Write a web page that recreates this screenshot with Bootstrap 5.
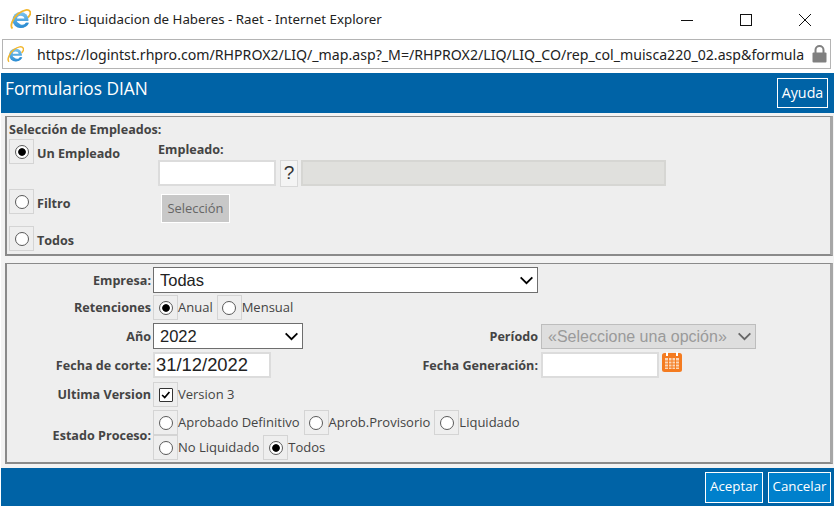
<!DOCTYPE html>
<html lang="es">
<head>
<meta charset="utf-8">
<title>Filtro</title>
<link rel="stylesheet" href="https://cdn.jsdelivr.net/npm/bootstrap@5.3.0/dist/css/bootstrap.min.css">
<style>
html,body{height:507px;overflow:hidden;background:#fff}
body{font-family:"Open Sans","Noto Sans",sans-serif;font-size:13px;color:#444;line-height:1.2}
.win-title{height:39px;padding-left:10px;font-family:"Noto Sans",sans-serif;font-size:13.300px;color:#222}
.win-title .ttl{margin-left:4px}
.win-ctrls{margin-left:auto;gap:0}
.win-ctrl{width:59px;height:39px;display:flex;align-items:center;justify-content:center}
.addr{height:30px;margin:0 3px 0 2px;border:1px solid #b4b4b4;padding:0 3px 0 4px;font-family:"Noto Sans",sans-serif;font-size:14.150px;color:#222;white-space:nowrap}
.addr .url{margin-left:13px;flex:1;min-width:0}
.dlg-head{height:40px;margin:4px 0 0 1px;background:#0063a6;color:#fff;padding:0 6px 0 4px}
.dlg-title{font-size:17.300px;color:#fff;margin:0;font-weight:400;padding-bottom:7px}
.dlg-btn{border:1px solid #fff;border-radius:0;color:#fff;font-size:13.300px;padding:0;height:30px;background:transparent;display:flex;align-items:center;justify-content:center}
.dlg-btn:hover{color:#fff}
.btn-ayuda{width:51px;font-size:14.300px}
.dlg-body{margin-left:1px;padding:3px 0 4px 4px;background:#f3f3f3}
.panel-a,.panel-b{margin:0 1px 0 0;border:2px solid #8a8a8a;border-width:1px 3px 2px 2px;border-right-color:#a6a6a6;background:#eee}
.panel-a{height:140px;padding:5px 0 0 2px}
.panel-b{margin-top:7px;height:201px;padding:3px 0 0 0}
.sec-title{font-weight:700;font-size:12.600px;color:#444;height:17px}
.rbox{width:25px;height:25px;background:#eee;border:1px solid #d4d4d4;display:inline-flex;align-items:center;justify-content:center;flex:none}
.rbox input{appearance:none;-webkit-appearance:none;width:14px;height:14px;margin:0;background:#fff;border:1px solid #5a5a5a;border-radius:50%;display:block}
.rbox input:checked{background:radial-gradient(circle,#000 0,#000 3.4px,#fff 4.2px)}
.rbox input[type=checkbox]{border-radius:1px;border-color:#333;position:relative}
.rbox input[type=checkbox]:checked{background:#fff url("data:image/svg+xml,%3Csvg xmlns='http://www.w3.org/2000/svg' viewBox='0 0 14 14'%3E%3Cpath d='M2.5 7l3 3 5.5-6.5' fill='none' stroke='%23000' stroke-width='2'/%3E%3C/svg%3E") center/contain no-repeat}
.emp-left{width:149px;flex:none;font-weight:700;font-size:12.600px}
.opt-a{height:25px;gap:3px}
.opt-a .opt-t{padding-top:4px}
.opt-a.last{margin-top:12px}
.opt-first{height:50px;align-items:flex-start}
.opt-first .opt-t{padding-top:7px}
.emp-right{font-size:12.600px;font-weight:700}
.emp-label{height:16px;margin-top:3px;margin-bottom:2px;line-height:16px}
.form-control.txt{border:2px solid #dcdcdc;border-radius:0;background:#fff;height:26px;padding:0 1px;box-shadow:none;font-family:"Liberation Sans",Arial,sans-serif;color:#222}
.q-mark{width:18px;height:27px;border:1px solid #d8d8d8;background:#f4f4f4;font-family:"Liberation Sans",Arial,sans-serif;font-size:19px;font-weight:400;color:#333;display:flex;align-items:center;justify-content:center;margin:0 3px 0 4px}
.txt-w{width:118px}
.form-control.txt.txt-dis{width:365px;background:#e0e0dd;border-color:#d6d6d3}
.btn-sel{margin:7px 0 0 3px;width:69px;height:29px;background:#c8c8c8;border:1px solid #fff;border-radius:0;font-size:12.900px;color:#666;padding:0}
.btn-sel:hover,.btn-sel:disabled{background:#c8c8c8;color:#666}
.f-row{display:flex;align-items:center}
.lbl{width:144px;flex:none;text-align:right;font-weight:700;font-size:12.600px;color:#444;margin-right:2px;padding-top:1px}
.lbl2{width:145px;flex:none;text-align:right;font-weight:700;font-size:12.600px;color:#444;margin-right:3px;padding-top:1px}
.half{width:386px;flex:none;display:flex;align-items:center}
.sel{height:26px;border:1px solid #6e6e6e;border-radius:0;padding:0 0 0 6px;font-family:"Liberation Sans",Arial,sans-serif;font-size:16.500px;color:#222;background-color:#fff;background-image:url("data:image/svg+xml,%3Csvg xmlns='http://www.w3.org/2000/svg' viewBox='0 0 16 10'%3E%3Cpath d='M1.5 1.5L8 8l6.5-6.5' fill='none' stroke='%23000' stroke-width='2'/%3E%3C/svg%3E");background-repeat:no-repeat;background-position:right 3px center;background-size:15px 9px;box-shadow:none;line-height:24px}
.sel-emp{width:385px}
.sel-ano{width:150px}
.sel-per{width:215px;height:25px;color:#9a9a9a;background-color:#dedede;border-color:#bdbdbd;font-size:16px;opacity:1;padding-left:6px;background-image:url("data:image/svg+xml,%3Csvg xmlns='http://www.w3.org/2000/svg' viewBox='0 0 16 10'%3E%3Cpath d='M1.5 1.5L8 8l6.5-6.5' fill='none' stroke='%23666' stroke-width='2'/%3E%3C/svg%3E")}
.sel-per:disabled{background-color:#dedede}
.radios{gap:0;font-size:13px;color:#444}
.radios .itm{margin-right:4px;display:flex;align-items:center}
.radios .itm span:not(.rbox){padding-top:1px}
.row-gap2{margin-top:2px}
.row-gap3{margin-top:3px}
.row-gap4{margin-top:4px}
.form-control.date-in{width:118px;height:26px;font-size:18.400px;padding:0 1px;color:#222;line-height:22px}
.cal{margin:-7px 0 0 3px;display:block;flex:none}
.dlg-foot{height:38px;margin:0 0 1px 1px;background:#0063a6;padding-right:3px;gap:5px}
.b-ac{background:#0080cc;width:58px}
.b-ca{background:#0080cc;width:63px}
.b-ac:hover,.b-ca:hover{background:#0080cc}
.b-ac,.b-ca{height:31px}
</style>
</head>
<body>
<div class="win-title d-flex align-items-center">
<svg width="21" height="21" viewBox="0 0 21 21"><defs><linearGradient id="ie" x1="0" y1="0" x2="0" y2="1"><stop offset="0" stop-color="#7cc4ee"/><stop offset="1" stop-color="#2f8fd4"/></linearGradient></defs><circle cx="10.500" cy="11" r="8" fill="url(#ie)"/><path d="M7 9.500c.4-3.800 7-3.800 7.400 0z" fill="#fff"/><path d="M6.800 12h14v1.800h-5c-1 2.400-5 2.600-6.500.6C8.400 14 7 13 6.800 12z" fill="#fff"/><path d="M16 13.800h3c-1.500 4.500-7 6-11 4.200 3 0 6.500-1 8-4.200z" fill="#2f8fd4"/><path d="M2.500 19.500C-.5 17 3 8.500 8.500 4.500S18.500 0 20 2.500 19 7.500 18 8.500" fill="none" stroke="#f2b62c" stroke-width="1.800"/></svg>
<span class="ttl">Filtro - Liquidacion de Haberes - Raet - Internet Explorer</span>
<div class="win-ctrls d-flex">
<div class="win-ctrl"><svg width="12" height="12"><path d="M0 6.500h12" stroke="#111"/></svg></div>
<div class="win-ctrl"><svg width="12" height="12"><rect x=".5" y=".5" width="11" height="11" fill="none" stroke="#111"/></svg></div>
<div class="win-ctrl"><svg width="12" height="12"><path d="M0 0l12 12M12 0L0 12" stroke="#111"/></svg></div>
</div>
</div>
<div class="addr d-flex align-items-center">
<svg width="17" height="17" viewBox="0 0 21 21"><circle cx="10.500" cy="11" r="8" fill="url(#ie)"/><path d="M7 9.500c.4-3.800 7-3.800 7.400 0z" fill="#fff"/><path d="M6.800 12h14v1.800h-5c-1 2.400-5 2.600-6.500.6C8.400 14 7 13 6.800 12z" fill="#fff"/><path d="M16 13.800h3c-1.500 4.500-7 6-11 4.200 3 0 6.500-1 8-4.200z" fill="#2f8fd4"/><path d="M2.500 19.500C-.5 17 3 8.500 8.500 4.500S18.500 0 20 2.500 19 7.500 18 8.500" fill="none" stroke="#f2b62c" stroke-width="1.800"/></svg>
<div class="url">https://logintst.rhpro.com/RHPROX2/LIQ/_map.asp?_M=/RHPROX2/LIQ/LIQ_CO/rep_col_muisca220_02.asp&amp;formula</div>
<svg width="15" height="18" viewBox="0 0 15 18"><path d="M3.500 8V5a4 4 0 0 1 8 0v3" fill="none" stroke="#808080" stroke-width="2"/><rect x="0.500" y="7.500" width="14" height="10" rx="1" fill="#808080"/></svg>
</div>

<div class="dlg-head d-flex align-items-center justify-content-between">
<h1 class="dlg-title">Formularios DIAN</h1>
<button type="button" class="btn dlg-btn btn-ayuda">Ayuda</button>
</div>

<div class="dlg-body">
<div class="panel-a">
<div class="sec-title">Selección de Empleados:</div>
<div class="d-flex">
<div class="emp-left">
<label class="opt-a opt-first d-flex"><span class="rbox"><input type="radio" name="e" checked></span><span class="opt-t">Un Empleado</span></label>
<label class="opt-a d-flex align-items-center"><span class="rbox"><input type="radio" name="e"></span><span class="opt-t">Filtro</span></label>
<label class="opt-a last d-flex align-items-center"><span class="rbox"><input type="radio" name="e"></span><span class="opt-t">Todos</span></label>
</div>
<div class="emp-right">
<div class="emp-label">Empleado:</div>
<div class="d-flex">
<input class="form-control txt txt-w" type="text">
<div class="q-mark">?</div>
<input class="form-control txt txt-dis" type="text" disabled>
</div>
<button type="button" class="btn btn-sel">Selección</button>
</div>
</div>
</div>

<div class="panel-b">
<div class="f-row"><div class="lbl">Empresa:</div><select class="form-select sel sel-emp"><option>Todas</option></select></div>
<div class="f-row radios row-gap2">
<div class="lbl">Retenciones</div>
<div class="d-flex radios">
<label class="itm"><span class="rbox"><input type="radio" name="r" checked></span><span>Anual</span></label>
<label class="itm"><span class="rbox"><input type="radio" name="r"></span><span>Mensual</span></label>
</div>
</div>
<div class="f-row row-gap3">
<div class="half"><div class="lbl">Año</div><select class="form-select sel sel-ano"><option>2022</option></select></div>
<div class="lbl2">Período</div><select class="form-select sel sel-per" disabled><option>«Seleccione una opción»</option></select>
</div>
<div class="f-row row-gap3">
<div class="half"><div class="lbl">Fecha de corte:</div><input class="form-control txt date-in" type="text" value="31/12/2022"></div>
<div class="lbl2">Fecha Generación:</div><input class="form-control txt txt-w" type="text">
<svg class="cal" width="20" height="20" viewBox="0 0 20 20"><rect x="0" y="1" width="20" height="19" rx="2.500" fill="#f47b20"/><path d="M5 0v4M15 0v4" stroke="#fff" stroke-width="2"/><rect x="3" y="6" width="14" height="11" fill="#fbd7b8"/><path d="M3 9h14M3 12h14M3 15h14M6.500 6v11M10 6v11M13.500 6v11" stroke="#f47b20"/></svg>
</div>
<div class="f-row radios row-gap4">
<div class="lbl">Ultima Version</div>
<label class="itm"><span class="rbox"><input type="checkbox" checked></span><span>Version 3</span></label>
</div>
<div class="f-row row-gap3">
<div class="lbl">Estado Proceso:</div>
<div class="radios">
<div class="d-flex">
<label class="itm"><span class="rbox"><input type="radio" name="s"></span><span>Aprobado Definitivo</span></label>
<label class="itm"><span class="rbox"><input type="radio" name="s"></span><span>Aprob.Provisorio</span></label>
<label class="itm"><span class="rbox"><input type="radio" name="s"></span><span>Liquidado</span></label>
</div>
<div class="d-flex">
<label class="itm"><span class="rbox"><input type="radio" name="s"></span><span>No Liquidado</span></label>
<label class="itm"><span class="rbox"><input type="radio" name="s" checked></span><span>Todos</span></label>
</div>
</div>
</div>
</div>
</div>

<div class="dlg-foot d-flex align-items-center justify-content-end">
<button type="button" class="btn dlg-btn b-ac">Aceptar</button>
<button type="button" class="btn dlg-btn b-ca">Cancelar</button>
</div>
<script src="https://cdn.jsdelivr.net/npm/bootstrap@5.3.0/dist/js/bootstrap.bundle.min.js"></script>
</body>
</html>
